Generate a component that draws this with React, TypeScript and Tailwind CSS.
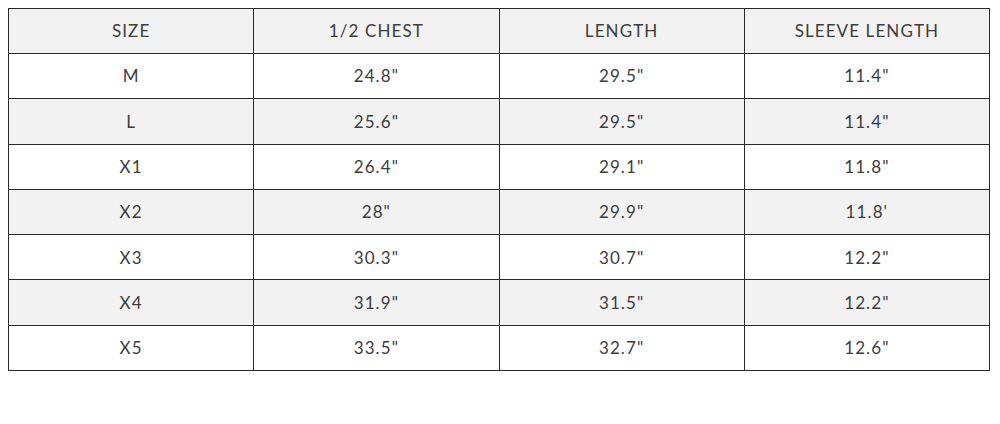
import React from "react";

const headers = ["SIZE", "1/2 CHEST", "LENGTH", "SLEEVE LENGTH"];

const rows: string[][] = [
  ["M", '24.8"', '29.5"', '11.4"'],
  ["L", '25.6"', '29.5"', '11.4"'],
  ["X1", '26.4"', '29.1"', '11.8"'],
  ["X2", '28"', '29.9"', "11.8'"],
  ["X3", '30.3"', '30.7"', '12.2"'],
  ["X4", '31.9"', '31.5"', '12.2"'],
  ["X5", '33.5"', '32.7"', '12.6"'],
];

export default function App() {
  return (
    <div className="w-[1000px] h-[424px] bg-white p-2" style={{ fontFamily: "Lato, 'Open Sans', sans-serif" }}>
      <table className="w-[982px] border-collapse table-fixed text-[17px] tracking-[1.1px] text-[#3d3d3d]">
        <thead>
          <tr className="h-[45px] bg-[#f2f2f2]">
            {headers.map((h) => (
              <th key={h} className="border-[1.5px] border-[#2a2a2a] font-normal text-center">
                {h}
              </th>
            ))}
          </tr>
        </thead>
        <tbody>
          {rows.map((row, i) => (
            <tr key={row[0]} className={i % 2 === 1 ? "h-[45.3px] bg-[#f2f2f2]" : "h-[45.3px] bg-white"}>
              {row.map((cell, j) => (
                <td key={j} className="border-[1.5px] border-[#2a2a2a] text-center">
                  {cell}
                </td>
              ))}
            </tr>
          ))}
        </tbody>
      </table>
    </div>
  );
}
